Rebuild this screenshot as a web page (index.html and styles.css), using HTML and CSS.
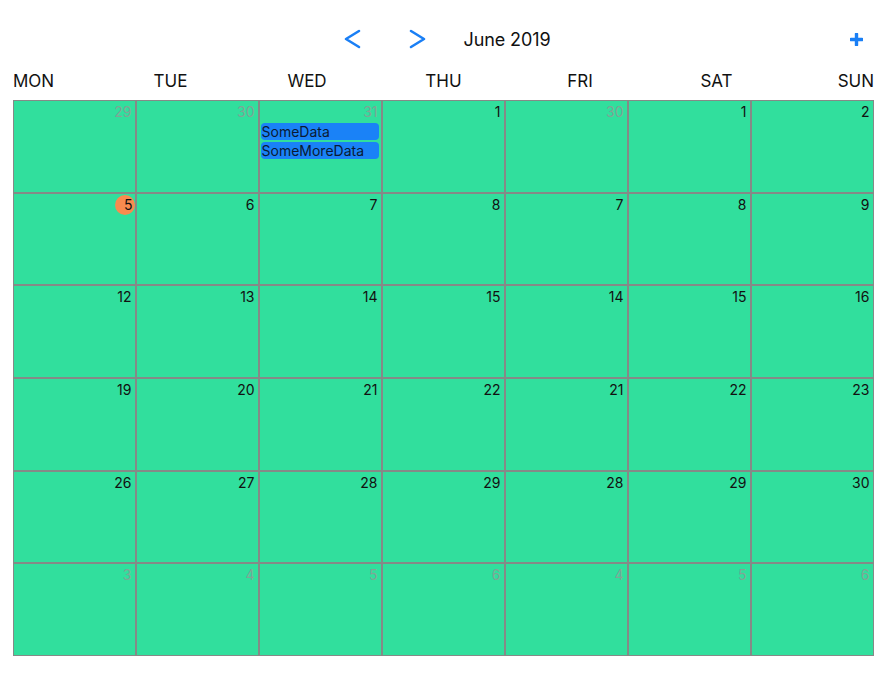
FILE: index.html
```html
<!DOCTYPE html>
<html lang="en">
<head>
  <meta charset="UTF-8" />
  <title>Calendar</title>
  <link rel="stylesheet" href="styles.css">
</head>
<body>

  <div class="top-bar">
    <div class="side"></div>
    <div class="month-nav">
      <button class="nav-btn prev" aria-label="Previous month">
        <svg width="18" height="20" viewBox="0 0 18 20"><path d="M16 2 L3 10 L16 18" fill="none" stroke="#1a7ff5" stroke-width="2.6" stroke-linecap="round" stroke-linejoin="round"/></svg>
      </button>
      <button class="nav-btn next" aria-label="Next month">
        <svg width="18" height="20" viewBox="0 0 18 20"><path d="M2 2 L15 10 L2 18" fill="none" stroke="#1a7ff5" stroke-width="2.6" stroke-linecap="round" stroke-linejoin="round"/></svg>
      </button>
      <div class="month-title">June 2019</div>
    </div>
    <div class="side right">
      <button class="add-btn" aria-label="Add event">
        <svg width="13" height="13" viewBox="0 0 13 13"><path d="M6.5 1 V12 M1 6.5 H12" stroke="#1a7ff5" stroke-width="3.4" stroke-linecap="round"/></svg>
      </button>
    </div>
  </div>

  <div class="weekdays">
    <span class="first">MON</span><span>TUE</span><span>WED</span><span>THU</span><span>FRI</span><span>SAT</span><span class="last">SUN</span>
  </div>

  <div class="month-grid" id="grid"></div>

  <script>
    // weeks as shown, "o" marks days that belong to another month
    const weeks = [
      ['29o', '30o', '31o', '1', '30o', '1', '2'],
      ['5', '6', '7', '8', '7', '8', '9'],
      ['12', '13', '14', '15', '14', '15', '16'],
      ['19', '20', '21', '22', '21', '22', '23'],
      ['26', '27', '28', '29', '28', '29', '30'],
      ['3o', '4o', '5o', '6o', '4o', '5o', '6o']
    ];

    const events = {
      '0-2': ['SomeData', 'SomeMoreData']
    };

    const grid = document.getElementById('grid');

    weeks.forEach((week, w) => {
      week.forEach((day, d) => {
        const cell = document.createElement('div');
        cell.className = 'day';

        const other = day.endsWith('o');
        const num = document.createElement('div');
        num.className = 'day-num';
        const label = document.createElement('span');
        label.textContent = other ? day.slice(0, -1) : day;
        if (other) label.className = 'other';
        if (w === 1 && d === 0) label.className = 'today';
        num.appendChild(label);
        cell.appendChild(num);

        (events[w + '-' + d] || []).forEach(title => {
          const ev = document.createElement('div');
          ev.className = 'event';
          ev.textContent = title;
          cell.appendChild(ev);
        });

        grid.appendChild(cell);
      });
    });
  </script>
</body>
</html>
```

FILE: styles.css
```css
* {
  box-sizing: border-box;
}

body {
  margin: 0;
  font-family: 'Inter', 'Liberation Sans', sans-serif;
  color: #111;
  background: #fff;
}

button {
  background: none;
  border: none;
  padding: 0;
  cursor: pointer;
}

.top-bar {
  display: grid;
  grid-template-columns: 1fr auto 1fr;
  align-items: center;
  height: 40px;
  margin-top: 19px;
  padding: 0 31px;
}

.side.right {
  display: flex;
  justify-content: flex-end;
}

.month-nav {
  display: flex;
  align-items: center;
}

.nav-btn {
  display: flex;
  width: 18px;
  height: 20px;
}

.nav-btn.prev {
  margin-right: 48px;
}

.nav-btn.next {
  margin-right: 36px;
}

.month-title {
  font-size: 18px;
  letter-spacing: -0.1px;
}

.add-btn {
  display: flex;
}

.weekdays {
  display: flex;
  justify-content: space-between;
  align-items: center;
  height: 41px;
  padding: 2px 20px 0 13px;
  font-size: 17px;
}

.weekdays span {
  width: 42px;
  text-align: center;
  white-space: nowrap;
}

.weekdays .first {
  text-align: left;
}

.weekdays .last {
  text-align: right;
}

.month-grid {
  display: grid;
  grid-template-columns: repeat(7, 123px);
  grid-template-rows: repeat(6, 92.7px);
  margin-left: 12.5px;
  width: 861px;
  background: #31df9d;
}

.day {
  border: 1px solid #858a87;
  padding: 2px 2px 0 1px;
}

.day-num {
  text-align: right;
  font-size: 14px;
  line-height: 17px;
  padding-right: 1px;
  height: 18px;
}

.day-num .other {
  color: #7fa596;
}

.day-num .today {
  display: inline-block;
  width: 20px;
  height: 20px;
  border-radius: 50%;
  background: #f98b4f;
  line-height: 20px;
  padding-right: 2px;
  margin-top: -2px;
  margin-right: -3px;
}

.event {
  background: #1a82f7;
  color: #0a1a33;
  font-size: 14px;
  line-height: 17px;
  height: 17px;
  border-radius: 4px;
  padding-left: 1px;
  margin: 2px 0 2px 0;
  white-space: nowrap;
  overflow: hidden;
}
```
